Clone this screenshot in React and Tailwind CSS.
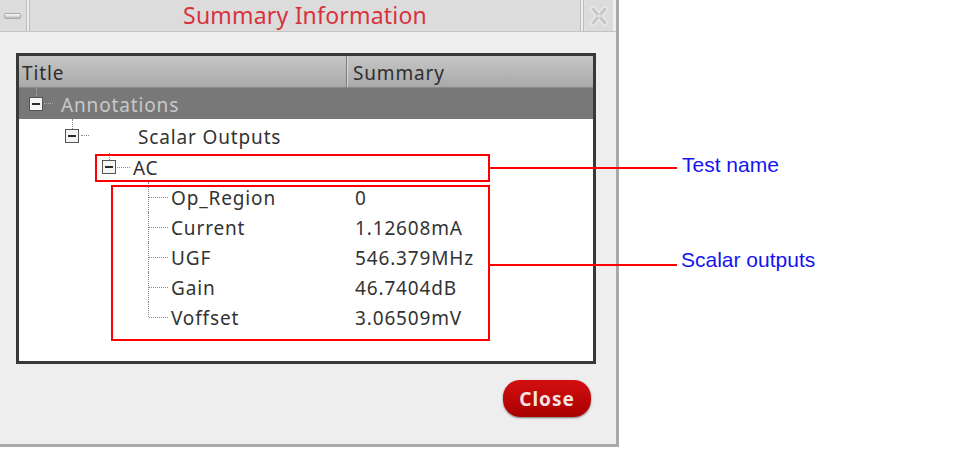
import React from "react";

const font = { fontFamily: '"Noto Sans", "Open Sans", sans-serif' };

function Expander() {
  return (
    <div className="w-[14px] h-[14px] border-[1.5px] border-[#555] bg-[#f4f4f4] flex items-center justify-center shrink-0">
      <div className="w-[8px] h-[2px] bg-[#2a2a2a]" />
    </div>
  );
}

function Dots({ w, className = "" }) {
  return <div className={`border-t border-dotted border-[#888] ${className}`} style={{ width: w }} />;
}

const children = [
  ["Op_Region", "0"],
  ["Current", "1.12608mA"],
  ["UGF", "546.379MHz"],
  ["Gain", "46.7404dB"],
  ["Voffset", "3.06509mV"],
];

export default function App() {
  return (
    <div className="relative w-[963px] h-[456px] bg-white overflow-hidden" style={font}>
      {/* Dialog */}
      <div className="w-[619px] h-[447px] bg-[#efeeee] border-r-[3px] border-b-[3px] border-[#a9a9a9] flex flex-col">
        {/* Title bar */}
        <div className="h-[32px] flex gap-[2px] pr-[3px] border-b border-[#c4c4c4]">
          <div className="w-[27px] h-full bg-[#dcdcdc] border-r border-[#bdbdbd] flex items-center pl-[4px]">
            <div className="w-[17px] h-[6px] rounded-[2px] border border-[#a8a8a8] bg-gradient-to-b from-[#ffffff] to-[#bcbcbc]" />
          </div>
          <div className="flex-1 h-full bg-[#dcdcdc] border-x border-[#bdbdbd] flex items-center justify-center">
            <span className="text-[23px] leading-none text-[#d8333d] pb-[1px] tracking-[0.2px]">Summary Information</span>
          </div>
          <div className="w-[30px] h-full bg-[#dcdcdc] border-l border-[#bdbdbd] flex items-center justify-center">
            <svg width="20" height="22" viewBox="0 0 20 22">
              <path d="M4 4 L16 18 M16 4 L4 18" stroke="#f8f8f8" strokeWidth="5" strokeLinecap="round" />
              <path d="M4 4 L16 18 M16 4 L4 18" stroke="#c9c9c9" strokeWidth="3.5" strokeLinecap="round" />
              <circle cx="10" cy="11" r="2" fill="#e2e2e2" />
            </svg>
          </div>
        </div>

        {/* Tree panel */}
        <div className="pl-[16px] pt-[21px]">
          <div className="w-[580px] h-[311px] border-[3px] border-[#383838] bg-white flex flex-col text-[19px] tracking-[0.85px] leading-none">
            {/* Header */}
            <div className="h-[32px] flex bg-gradient-to-b from-[#c6c6c6] to-[#a9a9a9] text-[#2e2e2e] border-b border-[#8a8a8a]">
              <div className="w-[328px] flex items-center pl-[3px] pt-[3px] border-r border-[#7c7c7c]">Title</div>
              <div className="flex-1 flex items-center pl-[5px] pt-[3px] border-l border-[#d8d8d8]">Summary</div>
            </div>
            {/* Annotations */}
            <div className="h-[31px] flex items-center bg-[#787878] text-[#c9c9c9]">
              <div className="w-[42px] h-full flex items-center pl-[10px] gap-[1px] relative">
                <div className="absolute left-[17px] top-0 h-[8px] border-l border-dotted border-[#aaa]" />
                <Expander />
                <Dots w={9} className="border-[#aaa]" />
              </div>
              <span className="pt-[3px]">Annotations</span>
            </div>
            {/* Scalar Outputs */}
            <div className="h-[33px] flex items-center text-[#333]">
              <div className="w-[119px] h-full flex items-center pl-[46px] gap-[2px] relative">
                <div className="absolute left-[53px] top-0 h-[10px] border-l border-dotted border-[#888]" />
                <Expander />
                <Dots w={8} />
              </div>
              <span className="pt-[3px]">Scalar Outputs</span>
            </div>
            {/* AC */}
            <div className="h-[30px] flex items-center text-[#333]">
              <div className="w-[114px] h-full flex items-center pl-[83px] gap-[1px] relative">
                <div className="absolute left-[90px] top-[1px] h-[7px] border-l border-dotted border-[#888]" />
                <Expander />
                <Dots w={13} />
              </div>
              <span className="pt-[2px]">AC</span>
            </div>
            {/* Children */}
            {children.map(([name, val], i) => (
              <div key={name} className="h-[30px] flex items-center text-[#333]">
                <div className="w-[328px] h-full flex items-center">
                  <div className="w-[152px] h-full relative shrink-0">
                    <div
                      className={`absolute left-[129px] top-0 border-l border-dotted border-[#888] ${
                        i === children.length - 1 ? "h-[15px]" : "h-full"
                      }`}
                    />
                    <div className="absolute left-[130px] top-[15px] w-[19px] border-t border-dotted border-[#888]" />
                  </div>
                  <span className="pt-[2px]">{name}</span>
                </div>
                <div className="pl-[8px] pt-[2px]">{val}</div>
              </div>
            ))}
          </div>
        </div>

        {/* Footer */}
        <div className="flex justify-end pr-[25px] pt-[16px]">
          <button className="w-[88px] h-[37px] rounded-[17px] bg-gradient-to-b from-[#d41010] to-[#a80000] shadow-[0_1px_2px_rgba(0,0,0,0.5)] text-[#f6e2e2] font-bold text-[19px] tracking-[1px] flex items-center justify-center pt-[2px]">
            Close
          </button>
        </div>
      </div>

      {/* Annotation overlays */}
      <div className="absolute left-[95px] top-[154px] w-[395px] h-[28px] border-2 border-[#ff0000]" />
      <div className="absolute left-[111px] top-[185px] w-[379px] h-[156px] border-2 border-[#ff0000]" />
      <div className="absolute left-[489px] top-[167px] w-[188px] h-[2px] bg-[#ff0000]" />
      <div className="absolute left-[489px] top-[264px] w-[188px] h-[2px] bg-[#ff0000]" />
      <div
        className="absolute left-[682px] top-[154px] text-[21px] leading-none text-[#1414f0]"
        style={{ fontFamily: '"Liberation Sans", Arial, sans-serif' }}
      >
        Test name
      </div>
      <div
        className="absolute left-[681px] top-[249px] text-[21px] leading-none text-[#1414f0]"
        style={{ fontFamily: '"Liberation Sans", Arial, sans-serif' }}
      >
        Scalar outputs
      </div>
    </div>
  );
}
